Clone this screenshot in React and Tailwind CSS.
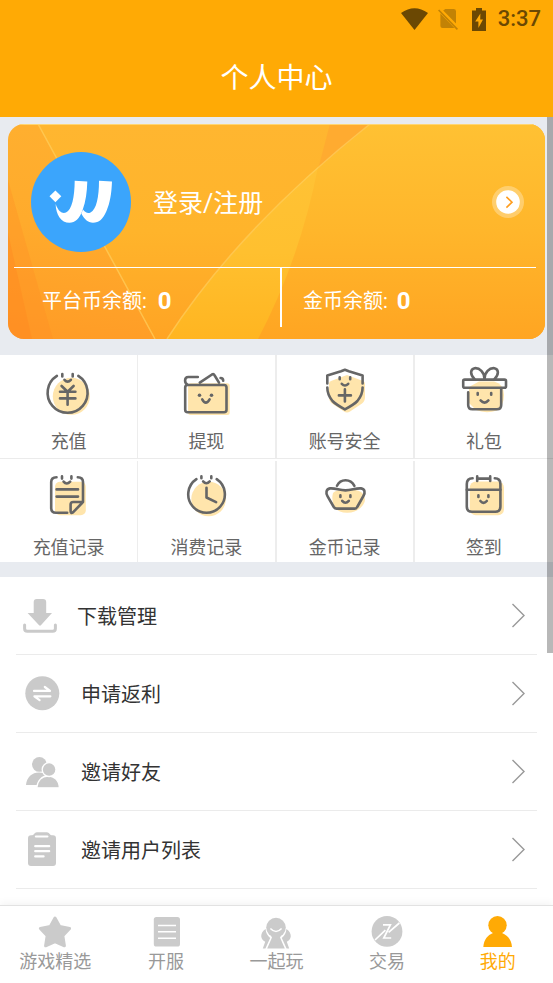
// App.jsx
// Personal center page: account card, shortcut grid, menu list and bottom tabs.
const ShortcutIcon = ({ children }) => (
  <svg
    viewBox="0 0 56 56"
    className="h-14 w-14"
    fill="none"
    stroke="#666"
    strokeWidth="2.6"
    strokeLinecap="round"
    strokeLinejoin="round"
    aria-hidden="true"
  >
    {children}
  </svg>
);

const shortcutRows = [
  [
    {
      label: '充值',
      icon: (
        <ShortcutIcon>
          <circle cx="30.3" cy="33.3" r="18.5" fill="#ffe5ac" stroke="none" />
          <path d="M15.9 12.9A20 20 0 1 0 37.3 12.9" />
          <path d="M21.3 11v2.4M31.7 11v2.4" />
          <path d="M23.5 16.8q3 3.6 6.4 0" />
          <path d="M20.6 23l6 5.8 6-5.8M19 28.8h15.4M19 35.4h15.4M26.6 28.8v13" />
        </ShortcutIcon>
      ),
    },
    {
      label: '提现',
      icon: (
        <ShortcutIcon>
          <rect x="10.1" y="20.3" width="41.6" height="31.7" rx="2.5" fill="#ffe5ac" stroke="none" />
          <rect x="7.2" y="22" width="41.3" height="27.3" rx="2.5" />
          <path d="M19.8 14H10.3Q7.1 14 7.1 17.6Q7.1 20.4 9.2 21.5" />
          <path d="M21.8 19.6L34 11.5Q35.6 10.6 36.5 12.2L41 19.6M42.6 15Q45.2 15 45.2 17.8" />
          <circle cx="21.5" cy="32.3" r="1.8" fill="#666" stroke="none" />
          <circle cx="33.5" cy="32.3" r="1.8" fill="#666" stroke="none" />
          <path d="M24.2 36.3q3.6 6.6 7.4 0" />
        </ShortcutIcon>
      ),
    },
    {
      label: '账号安全',
      icon: (
        <ShortcutIcon>
          <path
            d="M30 12L46 18Q48 18.5 48 21V34Q48 38 45 40.5L33 48.5Q30 50.5 27 48.5L15 40.5Q12 38 12 34V21Q12 18.5 14 18Z"
            fill="#ffe5ac"
            stroke="none"
          />
          <path d="M10.3 20.5V12.4L24 8.3L27.9 6.8L31.8 8.3L45.6 12.4V20.5" />
          <path d="M10.3 24.6Q10.3 32 15.5 38Q19 41.5 27.9 46.4Q37 41.5 40.4 38Q45.6 32 45.6 24.6" />
          <path d="M22.7 14.4v1.8M33.2 14.4v1.8M27.9 26.4v12M21.9 32.4h12" />
          <path d="M24.8 20.8q3.1 3.4 6.4 0" />
        </ShortcutIcon>
      ),
    },
    {
      label: '礼包',
      icon: (
        <ShortcutIcon>
          <path
            d="M23 18.5H38Q48 21 48 32Q48 42 41 47.5Q30 51 20 47L13 40V24Z"
            fill="#ffe5ac"
            stroke="none"
          />
          <rect x="7.2" y="16.6" width="42.8" height="8.2" rx="1.5" />
          <path d="M12.2 29.2V42Q12.2 46.2 16.4 46.2H41Q45.2 46.2 45.2 42V25.5" />
          <path d="M28.5 16C28.5 9.5 23.5 4.6 18.6 5.2C14 6.2 14 11.6 18.4 16M28.5 16C28.5 9.5 33.5 4.6 38.4 5.2C43 6.2 43 11.6 38.6 16" />
          <path d="M21.7 30v1.8M35.2 30v1.8" />
          <path d="M24.6 37.4q4 4.4 7.8 0" />
        </ShortcutIcon>
      ),
    },
  ],
  [
    {
      label: '充值记录',
      icon: (
        <ShortcutIcon>
          <rect x="14" y="12.7" width="30.8" height="33.5" rx="5" fill="#ffe5ac" stroke="none" />
          <path d="M15.5 8.2Q10.2 8.2 10.2 13V39Q10.2 43.8 15 43.8H26.2" />
          <path d="M36.8 8.2Q42 8.2 42 13V33L32 43.4Q29.6 45 29.6 42V35.6Q29.6 33 32.2 33H42" />
          <path d="M21 7.4v2.2M30.4 7.4v2.2M15.6 20.4H37M15.6 27.6H37" />
          <path d="M22.6 12.6q3 3.8 6.6 0" />
        </ShortcutIcon>
      ),
    },
    {
      label: '消费记录',
      icon: (
        <ShortcutIcon>
          <circle cx="30.6" cy="30" r="17.3" fill="#ffe5ac" stroke="none" />
          <path d="M18.4 10.2A18.3 18.3 0 1 0 38.7 10.2" />
          <path d="M23.4 7.4v1.8M33.3 7.4v1.8M28.5 18.7v9.8l9.6 4.6" />
          <path d="M25.1 12.4q3.2 3.6 6.6 0" />
        </ShortcutIcon>
      ),
    },
    {
      label: '金币记录',
      icon: (
        <ShortcutIcon>
          <path
            d="M16 24Q20 20 31 21Q42 20 46 25Q50 31 46 36Q40 44 30 43.8Q22 43.6 18 39Q14 32 16 24Z"
            fill="#ffe5ac"
            stroke="none"
          />
          <path d="M20 16.8C23.5 9.4 33.5 9.4 37.4 16.8" />
          <path d="M13 19.4C19 19 22 21.4 28.5 21.4C35 21.4 38 19 44 19.4C48 20 48.4 23.6 46.4 27L40.2 38Q39.4 39.6 37.6 39.6H19.6Q17.8 39.6 16.8 38L10.6 27.4C8.6 24 9 20 13 19.4Z" />
          <path d="M23.4 26.4v1.6M33.4 26.4v1.6" />
          <path d="M25.2 31.8q3.2 3.8 6.6 0" />
        </ShortcutIcon>
      ),
    },
    {
      label: '签到',
      icon: (
        <ShortcutIcon>
          <rect x="13.8" y="12.5" width="34.2" height="33.8" rx="6" fill="#ffe5ac" stroke="none" />
          <path d="M16.6 9.2Q10.8 9.2 10.8 15V37.6Q10.8 42.8 16 42.8H39.2Q44.4 42.8 44.4 37.6V15Q44.4 9.2 38.8 9.2" />
          <path d="M21.2 9.6h13M21.2 7.4v4.6M34.2 7.4v4.6M10.8 20.8H44.4M22.4 26.4v1.6M32.4 26.4v1.6" />
          <path d="M24.4 32q3 3.8 6.4 0" />
        </ShortcutIcon>
      ),
    },
  ],
];

const MenuIcon = ({ children }) => (
  <svg viewBox="0 0 36 37" className="h-[37px] w-9 shrink-0" fill="#cacaca" aria-hidden="true">
    {children}
  </svg>
);

const menuItems = [
  {
    label: '下载管理',
    pad: 'pl-[5px]',
    icon: (
      <MenuIcon>
        <path d="M12.7 5Q12.7 2 15.7 2H22Q25.2 2 25.2 5V16H31L19.9 28.3Q19 29.2 18.1 28.3L6.6 16H12.7Z" />
        <path
          d="M3.6 28V31.5Q3.6 34.3 6.4 34.3H31.6Q34.4 34.3 34.4 31.5V28"
          fill="none"
          stroke="#cacaca"
          strokeWidth="3"
          strokeLinecap="round"
        />
      </MenuIcon>
    ),
  },
  {
    label: '申请返利',
    pad: 'pl-[9px]',
    icon: (
      <MenuIcon>
        <circle cx="17.3" cy="18.3" r="17" />
        <path
          d="M9 15.9H25L19.8 12M25.4 21.3H9.4L14.6 25.2"
          fill="none"
          stroke="#fff"
          strokeWidth="2.2"
          strokeLinecap="round"
          strokeLinejoin="round"
        />
      </MenuIcon>
    ),
  },
  {
    label: '邀请好友',
    pad: 'pl-[9px]',
    icon: (
      <MenuIcon>
        <circle cx="14.4" cy="11.4" r="7.4" />
        <path d="M1 32C1.6 24.4 7 19.6 14 19.6C21 19.6 24 24 24 32Z" />
        <path
          d="M11.8 34.8C12.4 27.4 17 23 23 23C29.4 23 34 27.4 34.4 34.8Z"
          stroke="#fff"
          strokeWidth="1.3"
        />
        <circle cx="24.1" cy="16.6" r="6.9" stroke="#fff" strokeWidth="1.3" />
      </MenuIcon>
    ),
  },
  {
    label: '邀请用户列表',
    pad: 'pl-[9px]',
    icon: (
      <MenuIcon>
        <rect x="3" y="4.2" width="28" height="30.8" rx="3" />
        <path d="M7 5L10 2Q10.6 1.2 12 1.2H21.6Q23 1.2 23.8 2L26.6 5Z" />
        <path
          d="M10.9 5.5H22.4M10.2 15.2H24.2M10.2 20.2H24.2M10.2 25.4H18.6"
          stroke="#fff"
          strokeWidth="2.2"
          strokeLinecap="round"
        />
      </MenuIcon>
    ),
  },
];

const TabIcon = ({ children }) => (
  <svg viewBox="0 0 34 35" className="h-[35px] w-[34px]" fill="currentColor" aria-hidden="true">
    {children}
  </svg>
);

const tabs = [
  {
    label: '游戏精选',
    icon: (
      <TabIcon>
        <path
          d="M17 3L21.7 11.4L31.6 13.4L24.8 20.6L26.4 30.8L17 26.6L7.6 30.8L9.2 20.6L2.4 13.4L12.3 11.4Z"
          stroke="currentColor"
          strokeWidth="3"
          strokeLinejoin="round"
        />
      </TabIcon>
    ),
  },
  {
    label: '开服',
    icon: (
      <TabIcon>
        <rect x="4.8" y="2" width="26.2" height="29.6" rx="2.6" />
        <path d="M9 10.4H27M9 16.8H27M9 23.2H27" stroke="#fff" strokeWidth="1.5" />
      </TabIcon>
    ),
  },
  {
    label: '一起玩',
    icon: (
      <TabIcon>
        <circle cx="17" cy="12.6" r="9.8" />
        <path d="M10.6 18L13 22.6L8.2 33.4H25.8L21 22.6L23.4 18Z" />
        <path d="M6.6 14Q2.2 17 2.2 21.2Q2.6 24.8 6.2 26.8L3.8 33.4H6.4L11.2 23Q7 19.6 6.6 14Z" />
        <path d="M27.4 14Q31.8 17 31.8 21.2Q31.4 24.8 27.8 26.8L30.2 33.4H27.6L22.8 23Q27 19.6 27.4 14Z" />
        <path d="M11.4 13.4Q17 19.4 22.6 13.4" fill="none" stroke="#fff" strokeWidth="1.5" />
      </TabIcon>
    ),
  },
  {
    label: '交易',
    icon: (
      <TabIcon>
        <circle cx="17" cy="16.4" r="15.4" />
        <path
          d="M5 25L15.4 15.2M18.6 17.4L29.4 8M13 9.8H20.4L13.8 23H21.2"
          fill="none"
          stroke="#fff"
          strokeWidth="1.7"
        />
      </TabIcon>
    ),
  },
  {
    label: '我的',
    active: true,
    icon: (
      <TabIcon>
        <circle cx="16.5" cy="10.2" r="9.2" />
        <path d="M2.3 32C2.8 24.8 6.6 20 12 18H21C26.4 20 30.4 24.8 31 32Z" />
      </TabIcon>
    ),
  },
];

const StatusBar = () => (
  <div className="flex h-[38px] items-center justify-end pr-3 text-[#6b4803]">
    <svg viewBox="0 0 27 22" className="h-[22px] w-[27px]" fill="currentColor" aria-hidden="true">
      <path d="M0 5Q13.5 -4.6 27 5L13.5 22Z" />
    </svg>
    <svg viewBox="0 0 20 22" className="ml-2.5 h-[22px] w-5" fill="#c28205" aria-hidden="true">
      <path d="M7.4 1H15.6Q18 1 18 3.2V15.6L5.2 2.6ZM2.4 5.4L16.4 20H4.6Q2.4 20 2.4 18Z" />
      <path d="M.6 2L19.4 21.4" stroke="#c28205" strokeWidth="1.6" />
    </svg>
    <svg viewBox="0 0 14 23" className="ml-3.5 h-[23px] w-3.5" fill="currentColor" aria-hidden="true">
      <path d="M4 0H10V2.6H14V23H0V2.6H4Z" />
      <path d="M8.4 5.4L3.2 13.4H6.4V20L11 11.6H8.2Z" fill="#ffaa05" />
    </svg>
    <span className="ml-3 text-[22px] font-medium leading-6">3:37</span>
  </div>
);

const CardBackground = () => (
  <svg
    viewBox="0 0 537 215"
    preserveAspectRatio="none"
    className="absolute inset-0 h-full w-full"
    aria-hidden="true"
  >
    <defs>
      <linearGradient id="card-base" x1="0" y1="1" x2="0.35" y2="0">
        <stop offset="0" stopColor="#ff9b26" />
        <stop offset="0.5" stopColor="#ffab2c" />
        <stop offset="1" stopColor="#ffb030" />
      </linearGradient>
      <linearGradient id="card-right" x1="0" y1="0" x2="0" y2="1">
        <stop offset="0" stopColor="#ffc133" />
        <stop offset="0.5" stopColor="#ffb62b" />
        <stop offset="1" stopColor="#ffa522" />
      </linearGradient>
      <linearGradient id="card-band" x1="0" y1="0" x2="0" y2="1">
        <stop offset="0" stopColor="#ffc235" />
        <stop offset="0.5" stopColor="#ffc02f" />
        <stop offset="1" stopColor="#ffb521" />
      </linearGradient>
      <linearGradient id="card-mid" x1="0" y1="0" x2="0" y2="1">
        <stop offset="0" stopColor="#ffb630" />
        <stop offset="0.5" stopColor="#ffb42b" />
        <stop offset="1" stopColor="#ffa424" />
      </linearGradient>
    </defs>
    <rect width="537" height="215" fill="url(#card-base)" />
    <path d="M30 0L147 215H159Q215 135 310 44L322 0Z" fill="url(#card-mid)" />
    <path d="M0 56L45 215H0Z" fill="#ff8a24" opacity="0.3" />
    <path d="M0 109L24 215H0Z" fill="#ff8620" opacity="0.4" />
    <path d="M362 0Q230 105 159 215H537V0Z" fill="url(#card-right)" />
    <path d="M310 43Q215 130 159 215H250Q292 135 310 43Z" fill="url(#card-band)" />
    <path d="M322 0H362L311 43Z" fill="#ffab30" />
    <path
      d="M362 0Q230 105 159 215M30 0L147 215"
      fill="none"
      stroke="#ffcf5c"
      strokeOpacity="0.7"
      strokeWidth="1.5"
    />
    <path d="M0 .5H537" stroke="#ffd673" />
  </svg>
);

const AccountCard = () => (
  <section className="relative mx-2 overflow-hidden rounded-2xl text-white">
    <CardBackground />
    <div className="relative pb-3 pl-1.5 pr-[9px]">
      <div className="flex h-[143px] items-center pl-[17px] pr-3 pt-3">
        <svg viewBox="0 0 100 100" className="h-[100px] w-[100px] shrink-0" aria-hidden="true">
          <circle cx="50" cy="50" r="50" fill="#3ba5fc" />
          <g fill="#fff">
            <path d="M24.4 38.4L30.3 44.3L24.4 50.2L18.5 44.3Z" />
            <path d="M43.7 28.8L56.3 29.6C56 40 54.8 50 51.6 58C48.5 67 44 70.8 38.5 70.8C30 70.8 25 63 24.6 52C27.6 60 31.6 62 35 60.5C41 58 43.5 45 43.7 28.8Z" />
            <path d="M68 28.8L81 29.6C80.5 42 79 51 75.5 59C72 67 68 70.8 62 70.8C57 70.8 53 67 50.4 61.5L52 57.5C54 60.5 57 62 59.5 60.5C65.5 57.5 68 45 68 28.8Z" />
          </g>
        </svg>
        <a href="#login" className="ml-[22px] pt-1 text-[25px] leading-8">
          登录/注册
        </a>
        <button
          type="button"
          aria-label="登录"
          className="ml-auto flex h-8 w-8 items-center justify-center rounded-full bg-white/30"
        >
          <svg viewBox="0 0 24 24" className="h-6 w-6" aria-hidden="true">
            <circle cx="12" cy="12" r="11.8" fill="#fff" />
            <path d="M10.4 6.8L16 12.2L10.4 17.6" fill="none" stroke="#ff9d1e" strokeWidth="1.6" />
          </svg>
        </button>
      </div>
      <div className="flex h-[60px] border-t border-white">
        <p className="flex w-[268px] items-center border-r-2 border-white pl-7 pt-1.5 text-xl">
          平台币余额:
          <b className="ml-[11px] text-2xl">0</b>
        </p>
        <p className="flex flex-1 items-center pl-[21px] pt-1.5 text-xl">
          金币余额:
          <b className="ml-[9px] text-2xl">0</b>
        </p>
      </div>
    </div>
  </section>
);

const ShortcutCell = ({ item }) => (
  <a
    href="#shortcut"
    className="flex flex-col items-center gap-[11px] border-r-2 border-[#ededed] pt-2 leading-6 first:border-r last:border-r-0"
  >
    {item.icon}
    {item.label}
  </a>
);

const Shortcuts = () => (
  <nav className="mt-4 bg-white text-lg text-[#666]" aria-label="快捷入口">
    <div className="grid h-[104px] grid-cols-4 border-b border-[#ebebeb]">
      {shortcutRows[0].map((item) => (
        <ShortcutCell key={item.label} item={item} />
      ))}
    </div>
    <div className="grid h-[103px] grid-cols-4 pt-0.5">
      {shortcutRows[1].map((item) => (
        <ShortcutCell key={item.label} item={item} />
      ))}
    </div>
  </nav>
);

const Menu = () => (
  <ul className="mt-[15px] flex-1 bg-white px-4">
    {menuItems.map((item) => (
      <li key={item.label} className="border-b border-[#ebebeb]">
        <a
          href="#menu"
          className={`flex h-[77px] items-center gap-5 pr-3 text-xl text-[#333] ${item.pad}`}
        >
          {item.icon}
          <span className="pt-0.5">{item.label}</span>
          <svg viewBox="0 0 14 25" className="ml-auto h-[25px] w-3.5" fill="none" aria-hidden="true">
            <path d="M1.5 1L13 12.5L1.5 24" stroke="#999" strokeWidth="1.4" />
          </svg>
        </a>
      </li>
    ))}
  </ul>
);

const TabBar = () => (
  <nav
    className="relative grid h-[78px] grid-cols-5 border-t border-[#e2e2e2] bg-white pt-[9px] shadow-[0_-2px_8px_rgba(0,0,0,0.05)]"
    aria-label="底部导航"
  >
    {tabs.map((tab) => (
      <a
        key={tab.label}
        href="#tab"
        className={`flex flex-col items-center text-lg leading-6 ${
          tab.active ? 'text-[#ffaa05]' : 'text-[#cbcbcb]'
        }`}
      >
        {tab.icon}
        <span className={tab.active ? '' : 'text-[#999]'}>{tab.label}</span>
      </a>
    ))}
  </nav>
);

export default function App() {
  return (
    <div className="flex min-h-screen flex-col bg-white font-[Roboto,'Noto_Sans_CJK_SC',sans-serif]">
      <header className="bg-[#ffaa05]">
        <StatusBar />
        <h1 className="h-[79px] text-center text-[28px] leading-[81px] text-white">个人中心</h1>
      </header>
      <main className="relative flex flex-1 flex-col bg-[#e8ebf0] pt-[7px]">
        <AccountCard />
        <Shortcuts />
        <Menu />
        <div className="absolute right-0 top-0 h-[68%] w-1.5 bg-black/28" />
      </main>
      <TabBar />
    </div>
  );
}
